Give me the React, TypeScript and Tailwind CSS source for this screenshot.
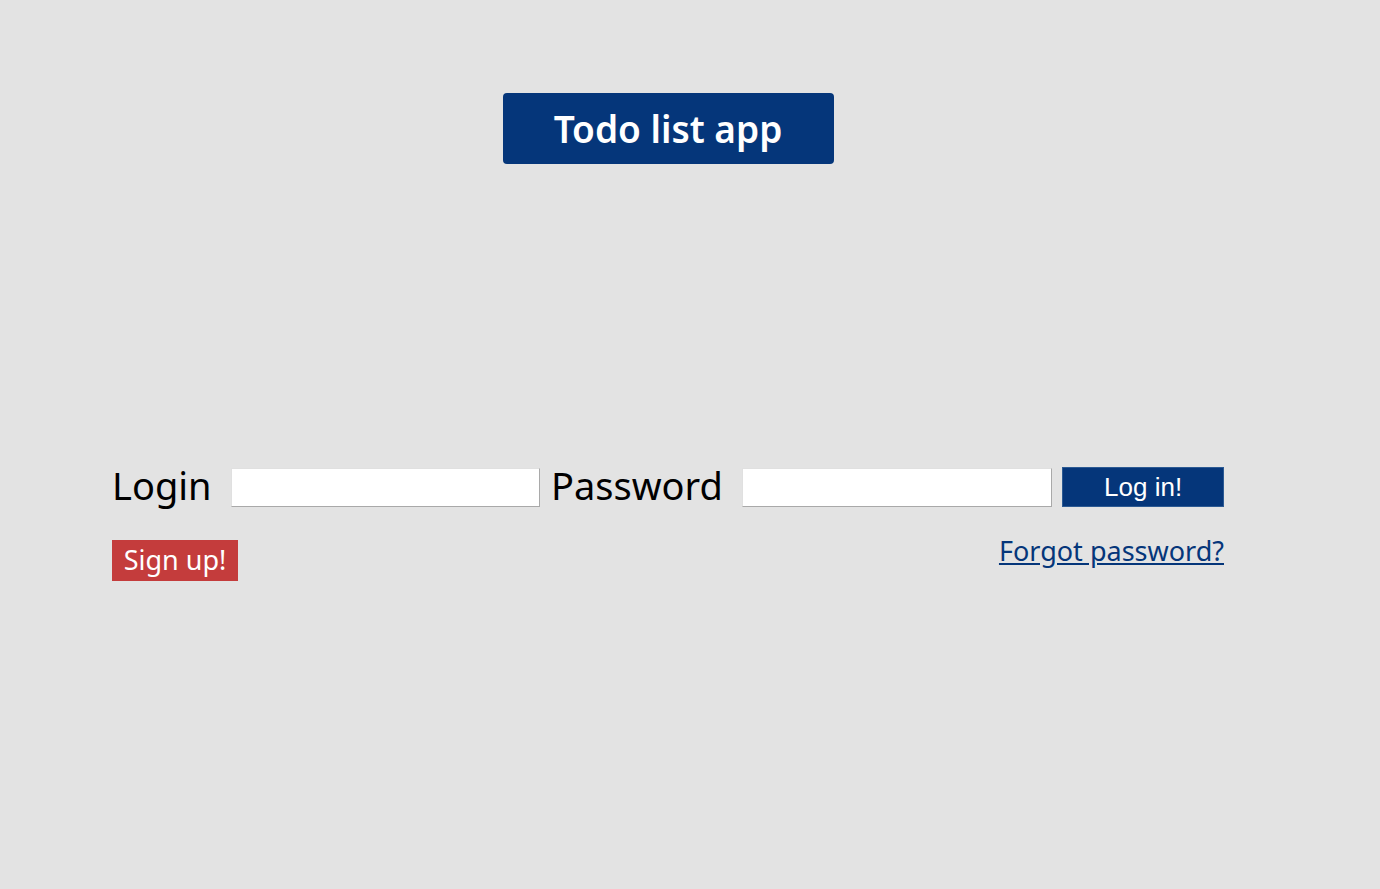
export default function App() {
  return (
    <div className="min-h-[889px] w-full bg-[#e3e3e3] font-['Noto_Sans',sans-serif]">
      <div className="w-[1112px] ml-[112px] pt-[93px]">
        <div className="flex justify-center">
          <h1 className="flex h-[71px] w-[331px] items-center justify-center rounded-[4px] bg-[#05367a] text-[37px] font-semibold text-white">
            Todo list app
          </h1>
        </div>

        <form className="mt-[303px]" onSubmit={(e) => e.preventDefault()}>
          <div className="flex items-center">
            <label className="mt-[-5px] text-[38px] leading-none text-black">Login</label>
            <input
              type="text"
              className="ml-[19px] h-[39px] w-[310px] border border-t-[#e0e0e0] border-l-[#e0e0e0] border-r-[#a9a9a9] border-b-[#a9a9a9] bg-white outline-none"
            />
            <label className="mt-[-5px] ml-[11px] text-[38px] leading-none text-black">Password</label>
            <input
              type="password"
              className="ml-[19px] h-[39px] w-[311px] border border-t-[#e0e0e0] border-l-[#e0e0e0] border-r-[#a9a9a9] border-b-[#a9a9a9] bg-white outline-none"
            />
            <button
              type="submit"
              className="ml-[10px] h-[40px] w-[162px] border border-[#2c5a93] bg-[#05367a] font-['Liberation_Sans',sans-serif] text-[26px] text-white"
            >
              Log in!
            </button>
          </div>

          <div className="mt-[33px] flex items-start justify-between">
            <button
              type="button"
              className="h-[41px] w-[126px] bg-[#c43c3c] text-[27px] text-white"
            >
              Sign up!
            </button>
            <a href="#" className="mt-[-9px] text-[27px] text-[#05367a] underline">
              Forgot password?
            </a>
          </div>
        </form>
      </div>
    </div>
  )
}
